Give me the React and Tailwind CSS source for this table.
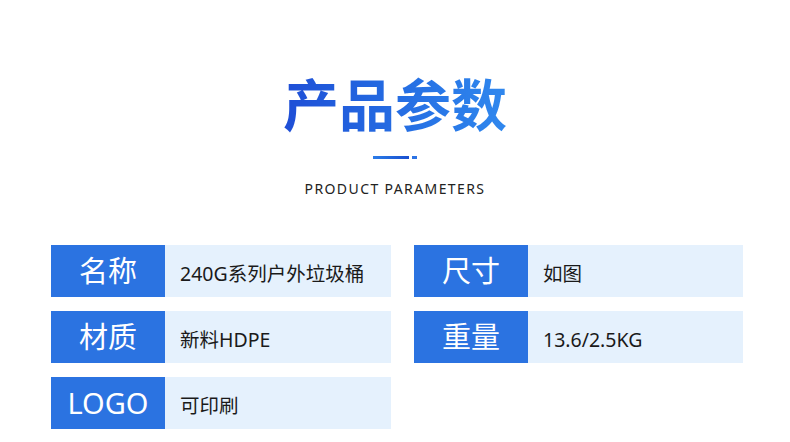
export default function App() {
  const left = [
    ['名称', '240G系列户外垃圾桶'],
    ['材质', '新料HDPE'],
    ['LOGO', '可印刷'],
  ];
  const right = [
    ['尺寸', '如图'],
    ['重量', '13.6/2.5KG'],
  ];

  const Row = ({ label, value, valueW }) => (
    <div className="flex h-[52px]">
      <div className="w-[114px] bg-[#2b73e1] flex items-center justify-center text-white text-[29px]">
        {label}
      </div>
      <div className={`${valueW} bg-[#e5f1fd] flex items-center pl-[15px] pt-[5px] text-[19.5px] text-[#1a1a1a]`}>
        {value}
      </div>
    </div>
  );

  return (
    <div
      className="w-[790px] h-[442px] bg-white overflow-hidden flex flex-col items-center"
      style={{ fontFamily: '"Noto Sans", "Noto Sans CJK SC", sans-serif' }}
    >
      <div
        className="mt-[70px] text-[56px] leading-[64px] font-bold bg-gradient-to-r from-[#1f4ed6] to-[#3088ee] bg-clip-text text-transparent"
        style={{ fontFamily: '"Noto Sans CJK SC", sans-serif' }}
      >
        产品参数
      </div>
      <div className="mt-[22px] flex items-center gap-[3px]">
        <div className="w-[36px] h-[3px] bg-gradient-to-r from-[#2c7ce8] to-[#1a4fd0]" />
        <div className="w-[5px] h-[3px] bg-[#2c73e4]" />
      </div>
      <div className="mt-[21px] text-[14px] leading-[18px] tracking-[1.4px] text-[#222]">
        PRODUCT PARAMETERS
      </div>
      <div className="mt-[47px] w-full flex pl-[51px] gap-[23px]">
        <div className="flex flex-col gap-[14px]">
          {left.map(([l, v]) => (
            <Row key={l} label={l} value={v} valueW="w-[226px]" />
          ))}
        </div>
        <div className="flex flex-col gap-[14px]">
          {right.map(([l, v]) => (
            <Row key={l} label={l} value={v} valueW="w-[215px]" />
          ))}
        </div>
      </div>
    </div>
  );
}
